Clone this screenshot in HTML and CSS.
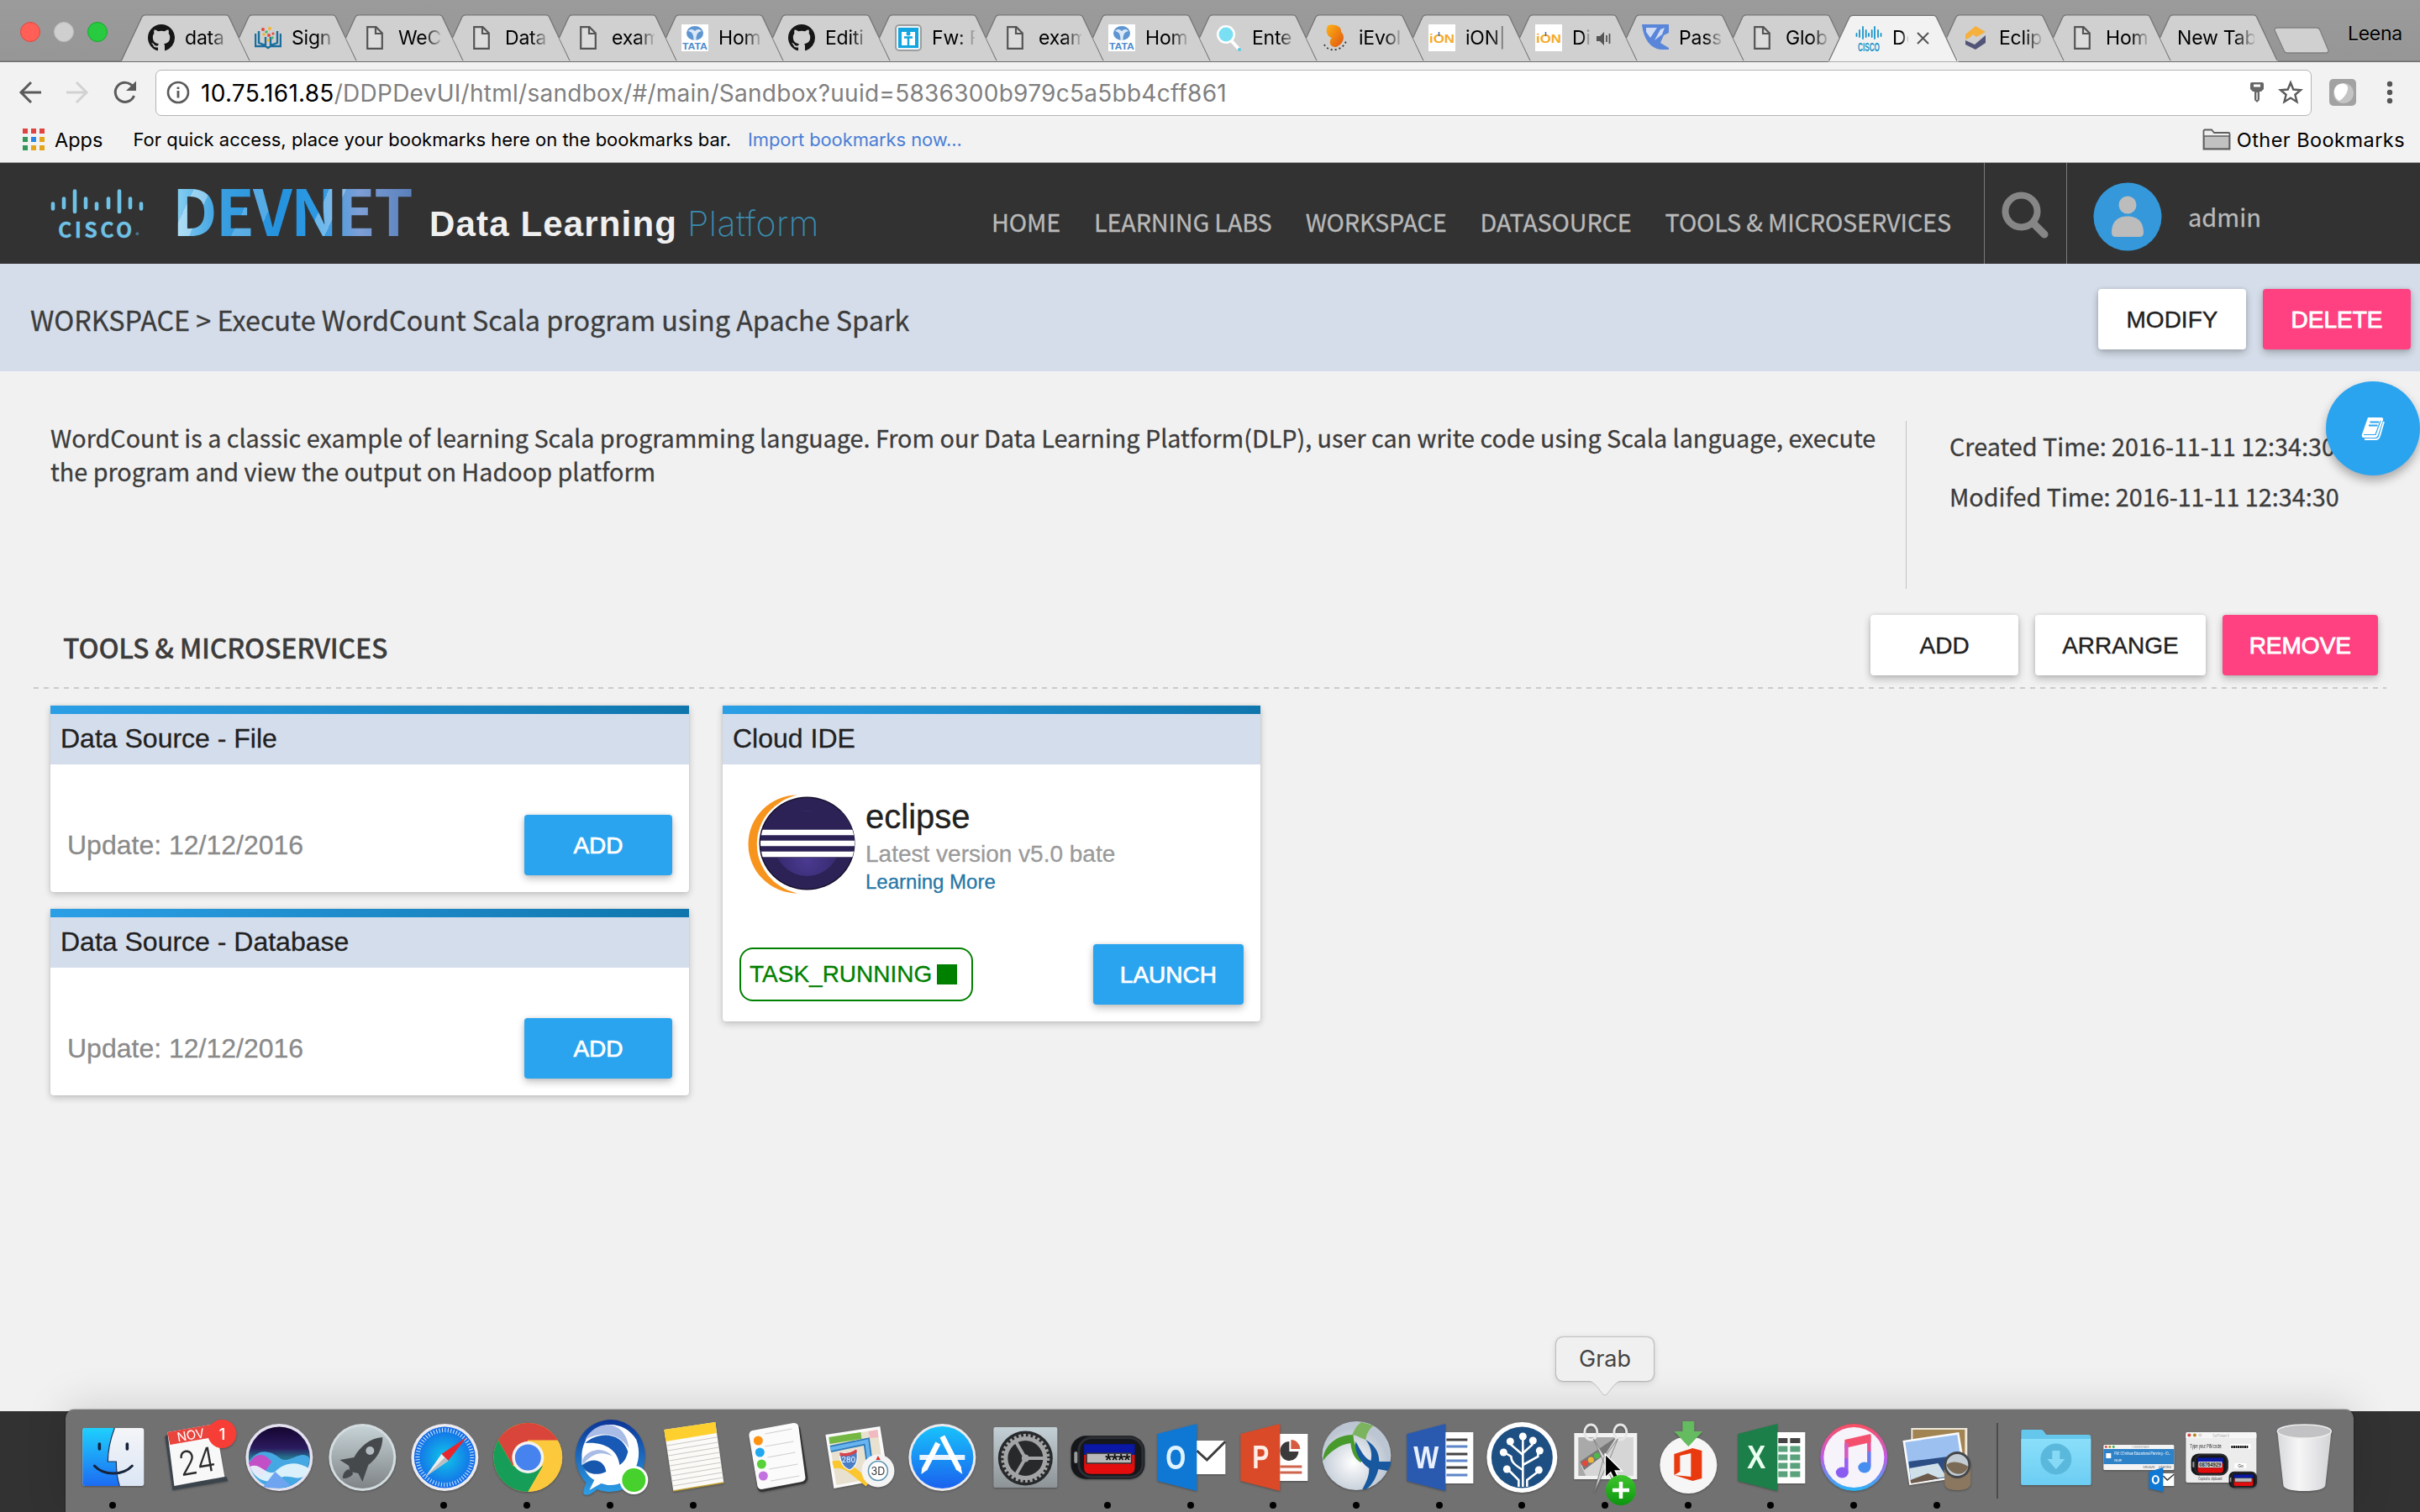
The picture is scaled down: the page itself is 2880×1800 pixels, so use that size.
FILE: index.html
```html
<!DOCTYPE html>
<html lang="en">
<head>
<meta charset="utf-8">
<title>DevNet Data Learning Platform</title>
<link rel="stylesheet" href="styles.css">
</head>
<body>
<svg class="defs" width="0" height="0" aria-hidden="true">
  <defs>
    <linearGradient id="gFinder" x1="0" y1="0" x2="0" y2="1"><stop offset="0" stop-color="#1fd0fd"/><stop offset="1" stop-color="#1c6cf2"/></linearGradient>
    <linearGradient id="gFace" x1="0" y1="0" x2="0" y2="1"><stop offset="0" stop-color="#f4f5f8"/><stop offset="1" stop-color="#dbe6f5"/></linearGradient>
    <linearGradient id="gSiri" x1="0" y1="0" x2="0" y2="1"><stop offset="0" stop-color="#14052f"/><stop offset=".35" stop-color="#2b1a5e"/><stop offset=".5" stop-color="#24708c"/><stop offset="1" stop-color="#3a7be0"/></linearGradient>
    <linearGradient id="gRocket" x1="0" y1="0" x2="0" y2="1"><stop offset="0" stop-color="#c6d2d6"/><stop offset="1" stop-color="#7f8486"/></linearGradient>
    <linearGradient id="gBlue" x1="0" y1="0" x2="0" y2="1"><stop offset="0" stop-color="#18c2fb"/><stop offset="1" stop-color="#1a62ee"/></linearGradient>
    <radialGradient id="gSafari"><stop offset="0" stop-color="#10c8e8"/><stop offset="1" stop-color="#1468e8"/></radialGradient>
    <linearGradient id="gPrefs" x1="0" y1="0" x2="0" y2="1"><stop offset="0" stop-color="#c3d0d6"/><stop offset="1" stop-color="#8d9396"/></linearGradient>
    <linearGradient id="gTunes" x1="0" y1="0" x2="0" y2="1"><stop offset="0" stop-color="#fb4f5e"/><stop offset=".5" stop-color="#c05be8"/><stop offset="1" stop-color="#27b4f6"/></linearGradient>
    <linearGradient id="gJabber" x1="0" y1="0" x2="0" y2="1"><stop offset="0" stop-color="#0b3597"/><stop offset="1" stop-color="#2d9fe6"/></linearGradient>
    <linearGradient id="gFolder" x1="0" y1="0" x2="0" y2="1"><stop offset="0" stop-color="#8adffa"/><stop offset="1" stop-color="#6ccdf3"/></linearGradient>
    <linearGradient id="gTrash" x1="0" y1="0" x2="1" y2="0"><stop offset="0" stop-color="#d8d9db"/><stop offset=".4" stop-color="#f6f6f7"/><stop offset="1" stop-color="#d3d4d6"/></linearGradient>
    <linearGradient id="gPlus" x1="0" y1="0" x2="0" y2="1"><stop offset="0" stop-color="#3fc62d"/><stop offset="1" stop-color="#0c9410"/></linearGradient>
    <radialGradient id="gSphere" cx=".45" cy=".6"><stop offset="0" stop-color="#fff"/><stop offset="1" stop-color="#bcc6d2"/></radialGradient>
    <linearGradient id="gFlame" x1="0" y1="0" x2="1" y2="1"><stop offset="0" stop-color="#fdb316"/><stop offset="1" stop-color="#e0530d"/></linearGradient>
    <radialGradient id="gMoon" cx=".5" cy=".75"><stop offset="0" stop-color="#4b3a92"/><stop offset="1" stop-color="#35296c"/></radialGradient>

    <symbol id="tab" viewBox="0 0 155 56"><path d="M0.5 56L25 3Q26.500 .8 29 .8H125Q127.500 .8 128.500 3L154 56Z" fill="#d0d0d0"/><path d="M0.5 55L25 3Q26.500 .8 29 .8H125Q127.500 .8 128.500 3L153 55" fill="none" stroke="#747474" stroke-width="1.300"/></symbol>
    <symbol id="tab-tucked" viewBox="0 0 155 56"><path d="M13.500 28L25 3Q26.500 .8 29 .8H125Q127.500 .8 128.500 3L154 56H27Z" fill="#d0d0d0"/><path d="M13.500 28L25 3Q26.500 .8 29 .8H125Q127.500 .8 128.500 3L153 55" fill="none" stroke="#747474" stroke-width="1.300"/></symbol>
    <symbol id="tab-active" viewBox="0 0 155 56"><path d="M-1 56L25 3Q26.500 .8 29 .8H125Q127.500 .8 128.500 3L155 56Z" fill="#f2f2f2"/><path d="M0.500 55L25 3Q26.500 .8 29 .8H125Q127.500 .8 128.500 3L153 55" fill="none" stroke="#747474" stroke-width="1.300"/></symbol>

    <symbol id="github" viewBox="0 0 16 16"><path fill="#161616" d="M8 0C3.58 0 0 3.58 0 8c0 3.54 2.29 6.53 5.47 7.59.4.07.55-.17.55-.38 0-.19-.01-.82-.01-1.49-2.01.37-2.53-.49-2.69-.94-.09-.23-.48-.94-.82-1.13-.28-.15-.68-.52-.01-.53.63-.01 1.08.58 1.23.82.72 1.21 1.87.87 2.33.66.07-.52.28-.87.51-1.07-1.78-.2-3.64-.89-3.64-3.95 0-.87.31-1.59.82-2.15-.08-.2-.36-1.02.08-2.12 0 0 .67-.21 2.2.82.64-.18 1.32-.27 2-.27s1.36.09 2 .27c1.53-1.04 2.2-.82 2.2-.82.44 1.1.16 1.92.08 2.12.51.56.82 1.27.82 2.15 0 3.07-1.87 3.75-3.65 3.95.29.25.54.73.54 1.48 0 1.07-.01 1.93-.01 2.2 0 .21.15.46.55.38A8.01 8.01 0 0016 8c0-4.42-3.58-8-8-8z"/></symbol>
    <symbol id="page" viewBox="0 0 32 32"><path d="M7.200 3.200H17.500L24.800 10.500V28.800H7.200Z" fill="#dcdcdc" stroke="#555" stroke-width="2.200"/><path d="M17 3.500V11H24.500" fill="none" stroke="#555" stroke-width="2.200"/></symbol>
    <symbol id="books" viewBox="0 0 32 32"><path d="M1 11V26H13L16 28L19 26H31V11M5 8V22L13 25V15M27 8V22L19 25V15" fill="none" stroke="#1a6e9e" stroke-width="2.400"/><g fill="#e8453c"><circle cx="10" cy="6" r="2"/><circle cx="17" cy="13" r="2"/><circle cx="22" cy="11" r="1.600"/></g><g fill="#f2b52c"><circle cx="18" cy="5" r="2"/><circle cx="11" cy="12" r="1.800"/><circle cx="16" cy="19" r="1.800"/></g><g fill="#4db56a"><circle cx="14" cy="9" r="1.700"/><circle cx="21" cy="16" r="1.700"/></g></symbol>
    <symbol id="tata" viewBox="0 0 32 32"><rect width="32" height="32" fill="#fff"/><ellipse cx="16" cy="10.500" rx="10" ry="8.500" fill="#5f96d2"/><path d="M14.500 19C14.500 12 13 9 8 8C11 5 14 6 16 8C18 6 21 5 24 8C19 9 17.500 12 17.500 19Z" fill="#dbe9f7"/><text x="1" y="30" textLength="30" lengthAdjust="spacingAndGlyphs" class="fav-text" font-size="11" fill="#4d8bcd">TATA</text></symbol>
    <symbol id="person" viewBox="0 0 32 32"><rect x="1" y="1" width="30" height="30" rx="4" fill="#eef5fa" stroke="#9d9d9d" stroke-width="2"/><rect x="4" y="4" width="24" height="24" fill="#12a5df"/><rect x="8" y="9" width="16" height="16" fill="#fff"/><circle cx="16" cy="11" r="2.500" fill="#12a5df"/><path d="M11 15.500H21M16 15V25" stroke="#12a5df" stroke-width="2.400"/></symbol>
    <symbol id="lens" viewBox="0 0 32 32"><path d="M19 19L28 29" stroke="#fff" stroke-width="4"/><circle cx="13" cy="12" r="11" fill="#fff"/><circle cx="13" cy="12" r="8.500" fill="#7bdff3"/><circle cx="29" cy="30" r="2" fill="#57cbe2"/></symbol>
    <symbol id="flame" viewBox="0 0 32 32"><path d="M8 1C18 -1 24 4 23 9C28 13 27 23 17 27C9 27 8 20 12 16C5 14 4 5 8 1Z" fill="url(#gFlame)"/><path d="M3 24C7 33 24 33 29 20" fill="none" stroke="#333" stroke-width="1.800" stroke-dasharray="2 3"/></symbol>
    <symbol id="ion" viewBox="0 0 32 32"><rect width="32" height="32" fill="#fff"/><text x="1" y="22" textLength="30" lengthAdjust="spacingAndGlyphs" class="fav-text" font-size="15" fill="#f5ab27">iON</text><path d="M12.500 9V14" stroke="#3c6cae" stroke-width="1.500"/></symbol>
    <symbol id="pass" viewBox="0 0 32 32"><path d="M0 0H32V10L26 13L22 22L32 28V30H22C10 28 2 18 0 0Z" fill="#5a86da"/><path d="M5 4H18L10 16L5 9ZM22 6L27 4L24 12L15 19Z" fill="#cfdcf4"/></symbol>
    <symbol id="cisco-mark" viewBox="0 0 32 32"><path d="M1.500 11V14M5 7V15M9 3V17M12.700 7V15M16 11V14M19.700 7V15M23 3V17M27 7V15M30.500 11V14" stroke="#1b94c9" stroke-width="1.800" stroke-linecap="round"/><text x="3" y="31.500" textLength="26" lengthAdjust="spacingAndGlyphs" class="fav-text" font-size="15" fill="#1b94c9">CISCO</text></symbol>
    <symbol id="che" viewBox="0 0 32 32"><path d="M4 12L16 2L28 9L17 15L13 12L9 16L4 18Z" fill="#f6b03c"/><path d="M4 19L15 24L28 13V22L16 30L4 24Z" fill="#525577"/></symbol>
    <symbol id="token" viewBox="0 0 90 54"><rect x="0" y="1" width="89" height="52" rx="18" fill="#14161a"/><rect x="8" y="2" width="80" height="50" rx="17" fill="#2c2f35"/><rect x="11" y="5" width="74" height="44" rx="14" fill="#15171b"/><path d="M16 11H77V24H16Z" fill="#0a18a5"/><path d="M16 24H77V40Q77 47 69 47H24Q16 47 16 40Z" fill="#e30d0d"/><rect x="19" y="22" width="54" height="12" fill="#b9b9b9" stroke="#333" stroke-width="1.500"/><rect x="4" y="20" width="4" height="14" rx="2" fill="#9a9a9a"/></symbol>
  </defs>
</svg>

<header class="browser">
  <div class="tabstrip">
    <div class="lights"><i class="light red"></i><i class="light grey"></i><i class="light green"></i></div>
    <div class="tabs">
      <div class="tab"><svg class="tab-shape"><use href="#tab"/></svg><svg class="fav"><use href="#github"/></svg><span class="tab-label">data</span></div>
      <div class="tab"><svg class="tab-shape"><use href="#tab-tucked"/></svg><svg class="fav"><use href="#books"/></svg><span class="tab-label">Sign</span></div>
      <div class="tab"><svg class="tab-shape"><use href="#tab-tucked"/></svg><svg class="fav"><use href="#page"/></svg><span class="tab-label">WeC</span></div>
      <div class="tab"><svg class="tab-shape"><use href="#tab-tucked"/></svg><svg class="fav"><use href="#page"/></svg><span class="tab-label">Data</span></div>
      <div class="tab"><svg class="tab-shape"><use href="#tab-tucked"/></svg><svg class="fav"><use href="#page"/></svg><span class="tab-label">exam</span></div>
      <div class="tab"><svg class="tab-shape"><use href="#tab-tucked"/></svg><svg class="fav"><use href="#tata"/></svg><span class="tab-label">Hom</span></div>
      <div class="tab"><svg class="tab-shape"><use href="#tab-tucked"/></svg><svg class="fav"><use href="#github"/></svg><span class="tab-label">Editi</span></div>
      <div class="tab"><svg class="tab-shape"><use href="#tab-tucked"/></svg><svg class="fav"><use href="#person"/></svg><span class="tab-label">Fw: F</span></div>
      <div class="tab"><svg class="tab-shape"><use href="#tab-tucked"/></svg><svg class="fav"><use href="#page"/></svg><span class="tab-label">exam</span></div>
      <div class="tab"><svg class="tab-shape"><use href="#tab-tucked"/></svg><svg class="fav"><use href="#tata"/></svg><span class="tab-label">Hom</span></div>
      <div class="tab"><svg class="tab-shape"><use href="#tab-tucked"/></svg><svg class="fav"><use href="#lens"/></svg><span class="tab-label">Ente</span></div>
      <div class="tab"><svg class="tab-shape"><use href="#tab-tucked"/></svg><svg class="fav"><use href="#flame"/></svg><span class="tab-label">iEvol</span></div>
      <div class="tab"><svg class="tab-shape"><use href="#tab-tucked"/></svg><svg class="fav"><use href="#ion"/></svg><span class="tab-label">iON|</span></div>
      <div class="tab"><svg class="tab-shape"><use href="#tab-tucked"/></svg><svg class="fav"><use href="#ion"/></svg><span class="tab-label short">Di</span><svg class="tab-tool" viewBox="0 0 20 20"><path d="M1 7H5L10 2V18L5 13H1Z" fill="#555"/><path d="M13 6V14M16.500 4V16" stroke="#555" stroke-width="1.800"/></svg></div>
      <div class="tab"><svg class="tab-shape"><use href="#tab-tucked"/></svg><svg class="fav"><use href="#pass"/></svg><span class="tab-label">Pass</span></div>
      <div class="tab"><svg class="tab-shape"><use href="#tab-tucked"/></svg><svg class="fav"><use href="#page"/></svg><span class="tab-label">Glob</span></div>
      <div class="tab active"><svg class="tab-shape"><use href="#tab-active"/></svg><svg class="fav"><use href="#cisco-mark"/></svg><span class="tab-label tiny">De</span><svg class="tab-tool" viewBox="0 0 20 20"><path d="M4 3L17 16M17 3L4 16" stroke="#555" stroke-width="2"/></svg></div>
      <div class="tab"><svg class="tab-shape"><use href="#tab-tucked"/></svg><svg class="fav"><use href="#che"/></svg><span class="tab-label">Eclip</span></div>
      <div class="tab"><svg class="tab-shape"><use href="#tab-tucked"/></svg><svg class="fav"><use href="#page"/></svg><span class="tab-label">Hom</span></div>
      <div class="tab"><svg class="tab-shape"><use href="#tab-tucked"/></svg><span class="tab-label wide">New Tab</span></div>
    </div>
    <svg class="new-tab" viewBox="0 0 66 32"><path d="M4 1H51Q54 1 55 4L65 28Q65 31 62 31H16Q13 31 12 28L1 4Q1 1 4 1Z" fill="#d0d0d0" stroke="#808080" stroke-width="1.300"/></svg>
    <span class="profile">Leena</span>
  </div>
  <div class="toolbar">
    <svg class="nav-icons" viewBox="0 0 146 30"><path d="M27 15H3M15 3L3 15L15 27" fill="none" stroke="#5a5a5a" stroke-width="3"/><path d="M57 15H81M69 3L81 15L69 27" fill="none" stroke="#d2d2d2" stroke-width="3"/><path d="M136 8A11.500 11.500 0 1 0 137.500 19" fill="none" stroke="#5a5a5a" stroke-width="3"/><path d="M140 1.500V13H128Z" fill="#5a5a5a"/></svg>
    <div class="omnibox">
      <svg class="info" viewBox="0 0 28 28"><circle cx="14" cy="14" r="12" fill="none" stroke="#5a5a5a" stroke-width="2.600"/><path d="M14 12V20.500M14 7.500V10" stroke="#5a5a5a" stroke-width="2.800"/></svg>
      <span class="url"><b>10.75.161.85</b>/DDPDevUI/html/sandbox/#/main/Sandbox?uuid=5836300b979c5a5bb4cff861</span>
      <svg class="key" viewBox="0 0 18 26"><path d="M3 1H15Q17 1 17 3V9L14 12H4L1 9V3Q1 1 3 1Z" fill="#666"/><rect x="5" y="3.500" width="8" height="3" fill="#fff"/><path d="M6 11H12V22L9 25L6 22Z" fill="#666"/><path d="M9 13V22" stroke="#fff" stroke-width="1.300"/></svg>
      <svg class="star" viewBox="0 0 30 30"><path d="M15 3.500L18.300 11.500L27 12.200L20.400 17.800L22.500 26.200L15 21.600L7.500 26.200L9.600 17.800L3 12.200L11.700 11.500Z" fill="none" stroke="#5a5a5a" stroke-width="2.400"/></svg>
    </div>
    <svg class="ext" viewBox="0 0 32 32"><rect width="32" height="32" rx="5" fill="#a2a2a2"/><circle cx="17" cy="17" r="12" fill="#c4c4c4"/><path d="M6 14C7 4 21 3 22 10C23 16 16 24 12 26C8 24 6 20 6 14Z" fill="#fff"/></svg>
    <svg class="dots" viewBox="0 0 8 28"><circle cx="4" cy="4" r="3.200" fill="#555"/><circle cx="4" cy="14" r="3.200" fill="#555"/><circle cx="4" cy="24" r="3.200" fill="#555"/></svg>
  </div>
  <div class="bookmarks">
    <svg class="apps" viewBox="0 0 26 26"><path d="M0 0h6v6h-6zM10 0h6v6h-6zM20 0h6v6h-6z" fill="#e04340"/><path d="M0 10h6v6h-6zM0 20h6v6h-6z" fill="#33985a"/><path d="M10 10h6v6h-6z" fill="#2a87e8"/><path d="M20 10h6v6h-6zM10 20h6v6h-6zM20 20h6v6h-6z" fill="#e5a51b"/></svg>
    <span class="bm-apps">Apps</span>
    <span class="bm-hint">For quick access, place your bookmarks here on the bookmarks bar.</span>
    <span class="bm-import">Import bookmarks now...</span>
    <svg class="folder" viewBox="0 0 34 26"><path d="M1.500 24.500V3Q1.500 1.500 3 1.500H11L14 5H31Q32.500 5 32.500 6.500V24.500Z" fill="#eee" stroke="#5f5f5f" stroke-width="1.800"/><path d="M2 9H32V24H2Z" fill="#c1c1c1" stroke="#5f5f5f" stroke-width="1.400"/></svg>
    <span class="bm-other">Other Bookmarks</span>
  </div>
</header>

<main class="site">
  <nav class="topbar">
    <div class="cisco">
      <svg class="cisco-bars" viewBox="0 0 112 30"><path d="M3 17.500V23.500M16 11.500V22M29 2.500V27M42 11.500V22M55 17.500V23.500M69 11.500V22M82 2.500V27M95 11.500V22M108 17.500V23.500" stroke="#6fc1e5" stroke-width="4.600" stroke-linecap="round"/></svg>
      <div class="cisco-word">CISCO<small>.</small></div>
    </div>
    <div class="devnet"><span>DEVNET</span></div>
    <div class="product"><b>Data Learning</b><span>Platform</span></div>
    <div class="menu"><a>HOME</a><a>LEARNING LABS</a><a>WORKSPACE</a><a>DATASOURCE</a><a>TOOLS &amp; MICROSERVICES</a></div>
    <div class="search"><svg viewBox="0 0 56 56"><circle cx="23.500" cy="23.500" r="19" fill="none" stroke="#868686" stroke-width="8"/><path d="M38 38L51 51" stroke="#868686" stroke-width="9" stroke-linecap="round"/></svg></div>
    <svg class="avatar" viewBox="0 0 82 82"><circle cx="41" cy="41" r="40.500" fill="#3498db"/><ellipse cx="41" cy="27" rx="10.500" ry="10.500" fill="#bcbcbc"/><path d="M22 60C22 46 30 40.500 41 40.500S60 46 60 60Q60 65 55 65H27Q22 65 22 60Z" fill="#bcbcbc"/></svg>
    <span class="user">admin</span>
  </nav>
  <section class="crumbs">
    <h1>WORKSPACE &gt; Execute WordCount Scala program using Apache Spark</h1>
    <button class="btn">MODIFY</button>
    <button class="btn pink">DELETE</button>
  </section>
  <section class="summary">
    <p>WordCount is a classic example of learning Scala programming language. From our Data Learning Platform(DLP), user can write code using Scala language, execute<br>the program and view the output on Hadoop platform</p>
    <div class="times"><div>Created Time: 2016-11-11 12:34:30</div><div>Modifed Time: 2016-11-11 12:34:30</div></div>
    <div class="fab"><svg viewBox="0 0 30 28"><path d="M9 1H25Q28 1 27 4L21 22Q20 25 17 25H4Q1 25 2 21Z" fill="#fff"/><path d="M11.500 6.500H22M10 10.500H20.500" stroke="#2ba4f0" stroke-width="1.800"/><path d="M4 21.500H18L24 5" fill="none" stroke="#2ba4f0" stroke-width="1.200"/><path d="M28 6L23 23Q22 27 18 27H5" fill="none" stroke="#fff" stroke-width="1.800"/></svg></div>
  </section>
  <section class="tools-head">
    <h2>TOOLS &amp; MICROSERVICES</h2>
    <button class="btn">ADD</button>
    <button class="btn">ARRANGE</button>
    <button class="btn pink">REMOVE</button>
  </section>
  <section class="board">
    <div class="column">
      <article class="card"><h3>Data Source - File</h3><div class="card-row"><span class="muted">Update: 12/12/2016</span><button class="btn blue">ADD</button></div></article>
      <article class="card"><h3>Data Source - Database</h3><div class="card-row"><span class="muted">Update: 12/12/2016</span><button class="btn blue">ADD</button></div></article>
    </div>
    <article class="card ide">
      <h3>Cloud IDE</h3>
      <div class="app">
        <svg class="eclipse" viewBox="0 0 130 118"><defs><clipPath id="moon"><ellipse cx="72" cy="58" rx="56" ry="54"/></clipPath></defs><path d="M60 .5A58.500 58.500 0 1 0 60 117.500A62 60 0 0 1 60 .5Z" fill="#f7941e"/><ellipse cx="72" cy="58" rx="59.500" ry="57.500" fill="#fff"/><ellipse cx="71.500" cy="58" rx="57" ry="55.500" fill="#17102c"/><ellipse cx="71.500" cy="58" rx="55.500" ry="54" fill="#2c2255"/><circle cx="71.500" cy="58" r="39" fill="url(#gMoon)"/><g clip-path="url(#moon)"><path d="M10 20H130V75H10Z" fill="#2c2255"/><path d="M15 45H128M15 58H128M15 71H128" stroke="#fff" stroke-width="6.500"/></g></svg>
        <div class="app-text"><strong>eclipse</strong><em>Latest version v5.0 bate</em><a>Learning More</a></div>
      </div>
      <div class="run"><div class="status"><span>TASK_RUNNING</span><i></i></div><button class="btn blue">LAUNCH</button></div>
    </article>
  </section>
</main>

<footer class="dock">
  <div class="app-icon running"><svg viewBox="0 0 98 122"><rect x="13" y="22" width="73" height="69" rx="3" fill="url(#gFace)"/><path d="M16 22H51C45 38 43 50 43 62H53C53 72 54 82 57 91H16Q13 91 13 88V25Q13 22 16 22Z" fill="url(#gFinder)"/><path d="M33 41V47M66 41V47" stroke="#16233a" stroke-width="3.600" stroke-linecap="round"/><path d="M27 67C38 79 61 79 72 67" fill="none" stroke="#16233a" stroke-width="3" stroke-linecap="round"/><path d="M51 22C45 38 43 50 43 62H53C53 72 54 82 57 91" fill="none" stroke="#1b3358" stroke-width="1.200"/></svg></div>
  <div class="app-icon"><svg viewBox="0 0 98 122"><path d="M13 32L16 30L26 90L86 80L88 85L22 96Z" fill="#3b444c"/><path d="M16 27L73 17L84 80L24 91Z" fill="#f8f8f8"/><path d="M16 27L73 17L76 32L19 42Z" fill="#e9453d"/><g transform="rotate(-10 50 50)" class="cal"><text x="47" y="35" text-anchor="middle" font-size="15" fill="#fff">NOV</text><text x="49" y="76" text-anchor="middle" font-size="40" font-weight="300" textLength="44" lengthAdjust="spacingAndGlyphs" fill="#2b2b2b">24</text></g><circle cx="81" cy="29" r="17" fill="#f73e36"/><text x="81" y="36" text-anchor="middle" font-size="19" class="cal badge" fill="#fff">1</text></svg></div>
  <div class="app-icon"><svg viewBox="-1 0 98 122"><circle cx="49" cy="57" r="40" fill="#e4e2ef"/><circle cx="49" cy="57" r="36.500" fill="url(#gSiri)"/><path d="M13 62C25 44 40 50 50 58S76 46 85 58C84 78 68 93.500 49 93.500S16 82 13 62Z" fill="#46a8e2"/><path d="M13 64C20 52 30 50 40 62L28 80C18 76 14 70 13 64Z" fill="#d83fc0" opacity=".85"/><path d="M14 68C26 62 34 80 44 74C54 64 68 60 84.500 70C76 92 62 74 49 82S20 84 14 68Z" fill="#eaf8ff" opacity=".9"/><path d="M30 92L44 74L62 90Q46 96 30 92Z" fill="#6ea4f0"/></svg></div>
  <div class="app-icon"><svg viewBox="-1 0 98 122"><circle cx="49" cy="57" r="40" fill="#d3dcdf"/><circle cx="49" cy="57" r="37" fill="url(#gRocket)"/><path d="M73 33C58 34 46 44 39 57L22 60L33 67L34 74L44 76L49 86L56 66C67 58 73 46 73 33ZM32 71C26 74 25 80 26 82C31 82 36 80 38 76Z" fill="#45494c"/><circle cx="58" cy="49" r="5" fill="#b3bcc0"/></svg></div>
  <div class="app-icon running"><svg viewBox="-1 0 98 122"><circle cx="49" cy="57" r="40" fill="#ececf0"/><circle cx="49" cy="57" r="36.500" fill="url(#gSafari)"/><circle cx="49" cy="57" r="32.500" fill="none" stroke="#d4ecfa" stroke-width="5" stroke-dasharray="1 2.400"/><path d="M75 33L45 53L53 61Z" fill="#e8262d"/><path d="M26 80L45 53L53 61Z" fill="#eee"/><path d="M26 80L53 61L49 57Z" fill="#b9bdc2"/></svg></div>
  <div class="app-icon running"><svg viewBox="-1 0 98 122"><circle cx="49" cy="57" r="41" fill="#fcc93c"/><path d="M13.500 36.500A41 41 0 0 1 84.500 36.500H49L31 67Z" fill="#d9453a"/><path d="M13.500 36.500A41 41 0 0 0 49 98L67 67L49 75L31 67Z" fill="#169e58"/><path d="M49 98A41 41 0 0 0 84.500 37H49L67 67Z" fill="#fcc93c"/><circle cx="49" cy="57" r="19" fill="#f4f2ee"/><circle cx="49" cy="57" r="15.500" fill="#4683ef"/></svg></div>
  <div class="app-icon running"><svg viewBox="0 0 98 122"><path d="M49 12A41.500 43 0 0 1 49 98C42 98 36 96 33 95C28 100 22 103 18 101C15 99 19 91 20 87C-4 62 8 14 49 12Z" fill="url(#gJabber)"/><path d="M20 36C32 12 66 12 80 36C90 64 72 92 46 90L38 88L24 96L30 84C16 76 10 54 20 36Z" fill="#fff"/><path d="M19 36C32 10 68 12 71 46C58 26 36 26 19 36Z" fill="#a9bce6"/><path d="M19 40C34 26 62 26 70 50C68 58 66 62 60 66C58 48 42 38 19 40Z" fill="#1759b4"/><path d="M15 62A21 18 0 0 1 57 62C56 72 50 74 50 74C52 60 40 50 15 66Z" fill="#fff"/><path d="M16 60A20 17 0 0 1 52 56C36 48 26 54 16 66Z" fill="#a9bce6"/><path d="M16 66C28 56 42 60 44 74C32 80 18 76 16 66Z" fill="#1757ae"/><circle cx="77" cy="84" r="17" fill="#fff"/><circle cx="77" cy="84" r="14" fill="#46d12c"/></svg></div>
  <div class="app-icon running"><svg viewBox="0 0 98 122"><path d="M14 24L75 15L85 87L25 97Z" fill="#fbfaf6"/><path d="M14 24L75 15L76.500 28L16 38Z" fill="#fdd02f"/><path d="M17 43L77 33M18 49L78 39M19 55L79 45M20 61L80 51M21 67L81 57M21 73L82 63M22 79L82 69M23 85L83 75M24 91L84 81" stroke="#c9c9c9" stroke-width="1.200"/><path d="M25 97L85 87" stroke="#bb9b2d" stroke-width="1.500"/></svg></div>
  <div class="app-icon"><svg viewBox="0 0 98 122"><path d="M22 28L72 19Q77 18 78 23L87 81Q87 86 83 88L33 98Q28 98 27 93L18 33Q18 29 22 28Z" fill="#333"/><path d="M21 25L70 16Q75 16 76 20L84 80Q85 84 80 86L32 95Q28 95 27 91L17 31Q17 26 21 25Z" fill="#fbfbfb"/><path d="M36 29L68 23M36 44L70 38M39 57L72 51M41 71L75 65M43 85L77 79" stroke="#cfcfcf" stroke-width="1.200"/><circle cx="28" cy="37" r="5.500" fill="#ff9210"/><circle cx="30" cy="51" r="5.500" fill="#20a9f1"/><circle cx="32" cy="65" r="5.500" fill="#58d13a"/><circle cx="34" cy="79" r="5.500" fill="#c273e0"/></svg></div>
  <div class="app-icon"><svg viewBox="0 0 98 122"><path d="M9 30L74 20L84 82L19 94Z" fill="#fafafa"/><path d="M13 33L71 24L79 80L22 90Z" fill="#e8e1cf"/><path d="M13 33L51 27L52 35L14 41Z" fill="#74b843"/><path d="M60 26L71 24L72 33L62 34Z" fill="#f2b9c0"/><path d="M15 47L58 38L62 68" fill="none" stroke="#2e79b9" stroke-width="8"/><path d="M15 47L58 38L62 68" fill="none" stroke="#67b4ee" stroke-width="4.500"/><path d="M18 66C34 62 44 76 60 88" fill="none" stroke="#fcc62f" stroke-width="9"/><path d="M26 51Q36 54 46 47Q50 66 38 72Q26 68 26 51Z" fill="#4a7fc8" stroke="#fff" stroke-width="1.200"/><path d="M26 51Q36 54 46 47L46.500 51Q37 57 26 55Z" fill="#d6434a"/><text x="36.500" y="63" text-anchor="middle" font-size="9" class="cal" fill="#fff">280</text><circle cx="71.600" cy="73" r="19.500" fill="#f4f4f4"/><circle cx="71.600" cy="73" r="11.500" fill="#fff" stroke="#5b93b0" stroke-width="1.500"/><text x="71.600" y="78" text-anchor="middle" font-size="12.500" class="cal" fill="#333">3D</text><path d="M71.600 55L74.500 60H69Z" fill="#d9342b"/></svg></div>
  <div class="app-icon"><svg viewBox="0 0 98 122"><circle cx="49" cy="57" r="40" fill="#ebebef"/><circle cx="49" cy="57" r="37" fill="url(#gBlue)"/><path d="M22 57H76" stroke="#e8f3fd" stroke-width="6"/><path d="M44 40L28 71M49 32L69 71" stroke="#fff" stroke-width="6.500"/><path d="M25 69L31 72L24 77ZM65 71L71 68L73 77Z" fill="#fff"/></svg></div>
  <div class="app-icon"><svg viewBox="0 0 98 122"><rect x="12" y="21" width="76" height="72" rx="2" fill="url(#gPrefs)"/><circle cx="50" cy="58" r="32.500" fill="#27292b"/><circle cx="50" cy="58" r="23.500" fill="none" stroke="#a2a4a5" stroke-width="5"/><circle cx="50" cy="58" r="27" fill="none" stroke="#a2a4a5" stroke-width="4" stroke-dasharray="3 2.650"/><path d="M50 58H72M50 58L39 39M50 58L39 77" stroke="#a2a4a5" stroke-width="4"/><circle cx="50" cy="58" r="4.500" fill="#a2a4a5"/></svg></div>
  <div class="app-icon running"><svg viewBox="0 0 98 122"><use href="#token" x="5" y="30" width="89" height="54"/><text x="46" y="67" font-size="20" textLength="30" class="fav-text" fill="#111">****</text></svg></div>
  <div class="app-icon running"><svg viewBox="0 0 98 122"><rect x="50" y="37" width="40" height="40" fill="#fff"/><path d="M56 49L68 60L90 38" fill="none" stroke="#3d3d3d" stroke-width="3"/><path d="M9 29L56 17V97L9 85Z" fill="#0f78d4"/><text x="19" y="71" font-size="40" textLength="24" lengthAdjust="spacingAndGlyphs" class="fav-text" fill="#dff2ff">O</text></svg></div>
  <div class="app-icon running"><svg viewBox="0 0 98 122"><rect x="50" y="29" width="40" height="56" fill="#fff"/><path d="M68 38A11 11.500 0 1 0 79 50H68Z" fill="#3a3a3a"/><path d="M70 36A11 11.500 0 0 1 81 47H70Z" fill="#d55b41"/><path d="M57 68H83M57 75H83" stroke="#d0654d" stroke-width="3"/><path d="M10 29L57 17V97L10 85Z" fill="#da4a28"/><text x="24" y="70" font-size="38" textLength="20" lengthAdjust="spacingAndGlyphs" class="fav-text" fill="#ffece6">P</text></svg></div>
  <div class="app-icon running"><svg viewBox="0 0 98 122"><circle cx="49" cy="55" r="41" fill="url(#gSphere)"/><path d="M9 61C10 42 26 30 45 30C46 40 48 48 58 58L54 63C46 58 43 50 42 40C28 42 18 50 9 61Z" fill="#499a2d"/><path d="M55 15L69 19C62 26 61 30 60 36C54 34 48 30 44 30C47 23 50 18 55 15Z" fill="#7cb35e"/><path d="M60 36C70 42 76 50 76 62H90C90 66 88 70 86 73L75 71C73 80 68 90 60 95L56 95C62 84 64 78 64 70C52 62 46 48 48 38C54 48 58 58 66 61C68 52 66 44 60 36Z" fill="#17589f"/></svg></div>
  <div class="app-icon running"><svg viewBox="0 0 98 122"><rect x="50" y="27" width="39" height="61" fill="#fff"/><path d="M57 36H82M57 53H82M57 69H82" stroke="#444" stroke-width="3"/><path d="M57 44H82M57 61H82M57 78H82" stroke="#5f86c8" stroke-width="3"/><path d="M10 29L56 17V97L10 85Z" fill="#2a5aaf"/><text x="18" y="70" font-size="36" textLength="30" lengthAdjust="spacingAndGlyphs" class="fav-text" fill="#e9f0ff">W</text></svg></div>
  <div class="app-icon running"><svg viewBox="0 0 98 122"><circle cx="49" cy="57" r="42" fill="#fff"/><circle cx="49" cy="57" r="36.500" fill="#1d4f82"/><g fill="none" stroke="#fff" stroke-width="2.600"><path d="M50 92V36M50 72C40 66 36 62 36 56L28 51M50 54L36 42V38M50 66L68 56V50M50 52L61 42V38M45 92V84L33 72M55 92V84L68 74"/></g><g fill="#fff"><circle cx="50" cy="32" r="4.500"/><circle cx="35" cy="38" r="4.500"/><circle cx="62" cy="37" r="4.500"/><circle cx="27" cy="51" r="4.500"/><circle cx="70" cy="49" r="4.500"/><circle cx="31" cy="71" r="4.500"/><circle cx="69" cy="72" r="4.500"/></g></svg></div>
  <div class="app-icon running"><svg viewBox="0 0 98 122"><rect x="12" y="28" width="75" height="55" fill="#f2f2f2"/><rect x="17" y="33" width="65" height="46" fill="#a9a9a9"/><path d="M62 33H82V79H26L20 66Z" fill="#d6d6d6"/><path d="M19 62L62 33L50 52L24 72Z" fill="#777"/><circle cx="25" cy="64" r="3.500" fill="#e2493b"/><circle cx="32" cy="60" r="3.500" fill="#eeb53a"/><circle cx="39" cy="55" r="3.500" fill="#4fb84a"/><ellipse cx="32" cy="27" rx="7.500" ry="9" fill="none" stroke="#e6e6e6" stroke-width="3"/><ellipse cx="67" cy="27" rx="7.500" ry="9" fill="none" stroke="#e6e6e6" stroke-width="3"/><path d="M35 35L52 62L64 98L47 62ZM64 35L47 58L36 98L53 62Z" fill="#d4d4d4" stroke="#777" stroke-width=".8"/><path d="M49 53V81L55.500 75L61 86L66 83L61 73H69Z" fill="#000" stroke="#fff" stroke-width="1.500"/></svg></div>
  <div class="app-icon running"><svg viewBox="0 0 98 122"><circle cx="49" cy="66" r="34" fill="#f6f6f6"/><path d="M42 14H56V26H66L49 44L32 26H42Z" fill="#65bb5f"/><path d="M32 53L54 46L65 49V82L54 85L32 78L52 80V52L39 55V74L32 78Z" fill="#e93a0f"/></svg></div>
  <div class="app-icon running"><svg viewBox="0 0 98 122"><rect x="50" y="27" width="40" height="61" fill="#fff"/><path d="M58 37H69M72 37H84" stroke="#444" stroke-width="6"/><path d="M58 47H69M72 47H84M58 57H69M72 57H84M58 67H69M72 67H84M58 77H69M72 77H84" stroke="#5aa27c" stroke-width="7"/><path d="M10 29L57 17V97L10 85Z" fill="#1c7e48"/><text x="21" y="70" font-size="38" textLength="22" lengthAdjust="spacingAndGlyphs" class="fav-text" fill="#eafff2">X</text></svg></div>
  <div class="app-icon running"><svg viewBox="0 0 98 122"><circle cx="49" cy="57" r="40" fill="url(#gTunes)"/><circle cx="49" cy="57" r="36" fill="#f6f4fa"/><path d="M67 31V50" stroke="#e0559c" stroke-width="4.500"/><path d="M67 50V68" stroke="#6a7cf0" stroke-width="4.500"/><path d="M38 36L69 29V39L38 46Z" fill="#f4506e"/><path d="M40 40V58" stroke="#d45cc0" stroke-width="4.500"/><path d="M40 58V74" stroke="#9a5cf0" stroke-width="4.500"/><ellipse cx="35" cy="75" rx="7.500" ry="6.500" fill="#8a5cf0"/><ellipse cx="61.500" cy="69" rx="7.500" ry="6.500" fill="#478ef0"/></svg></div>
  <div class="app-icon running"><svg viewBox="0 0 98 122"><rect x="18" y="22" width="67" height="50" fill="#efe9dd"/><rect x="20" y="24" width="62" height="46" fill="#a28453"/><path d="M8 37L75 27L84 80L16 90Z" fill="#fafafa"/><path d="M11 39L73 30L80 78L18 87Z" fill="#9cc0f0"/><path d="M15 62L77 54L80 78L18 87Z" fill="#2d4d85"/><path d="M16 70L50 64L60 80L18 87Z" fill="#cfe0ea"/><path d="M17 84L38 76L52 82L18 88Z" fill="#6c5a4c"/><path d="M57 64H89V88Q88 96 73 96T58 88Z" fill="#8b7760"/><circle cx="73" cy="66" r="16" fill="#44474a"/><circle cx="73" cy="66" r="13" fill="#c3ccd3"/><path d="M60 66C66 60 78 62 86 68C82 80 66 80 60 66Z" fill="#7b6a55"/></svg></div>
  <i class="divider"></i>
  <div class="app-icon"><svg viewBox="0 0 98 122"><path d="M8 26Q8 24 10 24H32Q34 24 35 26L38 30H88Q91 30 91 33V88Q91 90 89 90H10Q8 90 8 88Z" fill="#66c7ec"/><path d="M8 35H91V88Q91 90 89 90H10Q8 90 8 88Z" fill="url(#gFolder)"/><circle cx="49.500" cy="59" r="18.500" fill="#5ab8dc"/><path d="M45 49H54V59H60L49.500 71L39 59H45Z" fill="#86daf6"/></svg></div>
  <div class="app-icon"><svg viewBox="0 0 98 122"><rect x="8" y="42" width="84" height="30" rx="1.500" fill="#f4f4f4"/><rect x="8" y="47" width="84" height="18" fill="#2e82c8"/><rect x="11" y="52" width="6" height="6" fill="#fff"/><g class="cal"><circle cx="11" cy="44.500" r="1.400" fill="#e0443e"/><circle cx="15.500" cy="44.500" r="1.400" fill="#b5881c"/><circle cx="20" cy="44.500" r="1.400" fill="#2db34a"/><text x="42" y="46.300" font-size="4" fill="#999">1 Reminder</text><text x="21" y="54" font-size="5" textLength="67" lengthAdjust="spacingAndGlyphs" fill="#fff">FW: COntinue Educational Planning - IO...</text><text x="21" y="62" font-size="4" fill="#fff">Now</text><text x="55" y="70" font-size="4" fill="#555">Snooze</text><text x="74" y="70" font-size="4" fill="#555">Dismiss</text></g><rect x="78" y="76" width="14" height="15" fill="#fff"/><path d="M79 79L84 84L92 77" fill="none" stroke="#333" stroke-width="1.500"/><path d="M62 74L79 69V98L62 94Z" fill="#0f78d4"/><ellipse cx="70" cy="83.500" rx="3.500" ry="4.500" fill="none" stroke="#fff" stroke-width="2.200"/></svg></div>
  <div class="app-icon"><svg viewBox="0 0 98 122"><rect x="7" y="27" width="84" height="60" rx="2" fill="#ececec"/><path d="M9 27H89Q91 27 91 29V34H7V29Q7 27 9 27Z" fill="#f6f6f6"/><g class="cal"><circle cx="11" cy="30.500" r="2" fill="#e0443e"/><circle cx="17.500" cy="30.500" r="2" fill="#b5881c"/><circle cx="24" cy="30.500" r="2" fill="#d4d4d4"/><text x="39" y="33" font-size="5" textLength="20" lengthAdjust="spacingAndGlyphs" fill="#aaa">SofToken II</text><text x="12" y="46" font-size="6" textLength="38" lengthAdjust="spacingAndGlyphs" fill="#222">Type your PIN code:</text><rect x="60" y="41" width="24" height="6" fill="#fff"/><path d="M61 44.500H81" stroke="#111" stroke-width="3" stroke-dasharray="2 .6"/><rect x="65" y="64" width="14" height="6" fill="#fff"/><text x="69" y="69" font-size="5" fill="#333">Go</text><text x="22" y="84" font-size="4.500" textLength="28" lengthAdjust="spacingAndGlyphs" fill="#333">Copied to clipboard</text></g><use href="#token" x="13" y="52" width="45" height="27"/><rect x="22" y="62" width="28" height="7" fill="#d6d6d6"/><text x="23" y="68" font-size="6.500" textLength="26" lengthAdjust="spacingAndGlyphs" class="fav-text" fill="#222">08764929</text><use href="#token" x="58" y="73" width="34" height="21"/></svg></div>
  <div class="app-icon"><svg viewBox="0 0 98 122"><path d="M17 27L24 90Q25 97 49 97T74 90L81 27Z" fill="url(#gTrash)"/><ellipse cx="49" cy="26" rx="32" ry="8" fill="#c2c2c4" stroke="#eee" stroke-width="1.500"/></svg></div>
  <div class="tooltip">Grab<svg viewBox="0 0 36 18"><path d="M0 0H36C28 2 22 17 18 17S8 2 0 0Z" fill="#f0f0f0"/><path d="M0 .5C8 2 14 17 18 17S28 2 36 .5" fill="none" stroke="#bdbdbd" stroke-width="1"/></svg></div>
  <svg class="plus" viewBox="0 0 38 38"><circle cx="19" cy="19" r="18" fill="url(#gPlus)"/><path d="M19 9V29M9 19H29" stroke="#fff" stroke-width="4.500"/></svg>
</footer>
</body>
</html>
```
FILE: styles.css
```css
* { box-sizing: border-box; }
body {
  margin: 0;
  width: 2880px;
  height: 1800px;
  overflow: hidden;
  position: relative;
  display: flex;
  flex-direction: column;
  background: #323232;
  font-family: "Liberation Sans", Arial, sans-serif;
}
svg { display: block; flex: none; }
.defs { position: absolute; }
.fav-text { font-family: "Liberation Sans", Arial, sans-serif; font-weight: 700; }
.cal { font-family: Inter, sans-serif; }
.badge { font-weight: 500; }

/* browser window */
.browser { height: 194px; background: #f2f2f2; border-bottom: 1.500px solid #a6a6a6; font-family: Inter, Roboto, sans-serif; color: #000; }
.tabstrip { height: 74px; display: flex; background: linear-gradient(#9b9b9b, #969696); box-shadow: inset 0 -1.500px 0 #6d6d6d; }
.lights { width: 144px; display: flex; gap: 16px; padding: 26px 0 0 24px; }
.light { width: 24px; height: 24px; border-radius: 50%; }
.red { background: #ff5f57; border: 1px solid #e2473f; }
.grey { background: #cfcfcf; border: 1px solid #bdbdbd; }
.green { background: #28cb40; border: 1px solid #17a82c; }
.tabs { display: flex; height: 74px; padding-top: 17px; width: 2562px; }
.tab { position: relative; flex: 0 0 127px; height: 57px; display: flex; padding: 12px 0 0 32px; }
.tab-shape { position: absolute; left: 0; top: 0; width: 155px; height: 56px; z-index: 0; }
.tab > :not(.tab-shape) { position: relative; z-index: 1; }
.active { z-index: 2; }
.active .tab-shape { height: 57px; }
.fav { width: 32px; height: 32px; }
.tab-label { width: 51px; margin-left: 12px; overflow: hidden; white-space: nowrap; font-size: 23px; letter-spacing: -.2px; line-height: 33px; -webkit-mask-image: linear-gradient(90deg, #000 60%, rgba(0,0,0,.1)); mask-image: linear-gradient(90deg, #000 60%, rgba(0,0,0,.1)); }
.short { width: 21px; }
.tiny { width: 19px; }
.wide { width: 92px; margin-left: 2px; -webkit-mask-image: linear-gradient(90deg, #000 75%, rgba(0,0,0,.1)); mask-image: linear-gradient(90deg, #000 75%, rgba(0,0,0,.1)); }
.tab-tool { width: 20px; height: 20px; margin: 7px 0 0 7px; }
.new-tab { width: 66px; height: 32px; margin-top: 32px; }
.profile { margin: 23px 0 0 22px; font-size: 23px; line-height: 34px; letter-spacing: -.3px; text-shadow: 0 1px 0 #bbb; }
.toolbar { display: flex; align-items: center; height: 72px; padding-left: 22px; }
.nav-icons { width: 146px; height: 30px; }
.omnibox { width: 2566px; height: 55px; margin-left: 17px; border: 1.500px solid #b4b4b4; border-radius: 7px; background: #fff; display: flex; align-items: center; padding: 0 9px 0 12px; }
.info { width: 28px; height: 28px; }
.url { margin-left: 13px; margin-right: auto; padding-top: 1px; color: #808080; font-size: 28px; letter-spacing: .27px; white-space: nowrap; }
.url b { font-weight: 400; color: #000; }
.key { width: 18px; height: 26px; }
.star { width: 30px; height: 30px; margin-left: 16px; }
.ext { width: 32px; height: 32px; margin-left: 21px; }
.dots { width: 8px; height: 28px; margin-left: 36px; }
.bookmarks { display: flex; align-items: center; height: 46px; padding: 0 18px 0 27px; font-size: 23.500px; white-space: nowrap; margin-top: -3px; }
.apps { width: 26px; height: 26px; }
.bm-apps { margin-left: 12px; }
.bm-hint { margin-left: 36px; font-size: 22px; }
.bm-import { margin-left: 20px; font-size: 22px; letter-spacing: -.1px; color: #4a7fd6; }
.folder { width: 34px; height: 26px; margin-left: auto; }
.bm-other { margin-left: 7px; letter-spacing: .45px; }

/* site */
.site { height: 1486px; background: #f1f1f1; color: #3c3c3c; font-family: "Noto Sans CJK SC", "Noto Sans", sans-serif; -webkit-text-stroke: .3px; }
.topbar { height: 120px; background: #323232; display: flex; padding-left: 60px; white-space: nowrap; }
.cisco { width: 145px; padding-top: 31px; }
.cisco-bars { width: 112px; height: 30px; }
.cisco-word { padding-left: 9px; color: #6fc1e5; font-weight: 700; font-size: 25px; line-height: 34px; letter-spacing: 3.300px; display: flex; }
.cisco-word small { font-size: 18px; color: #49778c; }
.devnet { width: 306px; font-weight: 700; font-size: 75px; line-height: 110px; letter-spacing: -1.700px; }
.devnet span { background: linear-gradient(115deg, transparent 0 12%, rgba(255,255,255,.35) 12% 18%, transparent 18% 33%, rgba(255,255,255,.2) 33% 42%, transparent 42% 60%, rgba(255,255,255,.3) 60% 66%, transparent 66%), linear-gradient(90deg, #8ed2f2, #3a9fe0 20%, #2492de 45%, #2e9ae4 62%, #7d9fd6 78%, #5a80ba); -webkit-background-clip: text; background-clip: text; color: transparent; -webkit-text-stroke: 0; }
.product { width: 671px; padding-top: 45px; font: 700 42px/55px "Liberation Sans", Arial, sans-serif; letter-spacing: 1.150px; color: #f0f0f0; display: flex; gap: 12px; -webkit-text-stroke: 0; }
.product span { font: 200 41px/55px Inter, sans-serif; letter-spacing: .5px; color: #3a8cb0; }
.menu { display: flex; gap: 40px; width: 1179px; margin-left: -2px; padding-top: 19px; margin-right: 2px; font-size: 28.800px; letter-spacing: -.16px; line-height: 101px; color: #b9b9b9; }
.search { width: 99px; border: solid #7b7b7b; border-width: 0 1.500px; padding: 34px 0 0 20px; }
.search svg { width: 56px; height: 56px; }
.avatar { width: 82px; height: 82px; margin: 23px 0 0 31px; }
.user { margin-left: 31px; font-size: 29px; line-height: 127px; color: #b9b9b9; }
.crumbs { height: 128px; background: #d4dde9; display: flex; align-items: center; padding: 4px 11px 0 36px; gap: 20px; }
h1, h2, h3, p { margin: 0; font-weight: 400; }
h1 { flex: 1; font-size: 32.350px; line-height: 60px; white-space: nowrap; }
.btn { min-width: 176px; height: 72px; padding: 1px 32px 0; border: 0; border-radius: 4px; background: #fff; color: #212121; font: 400 28px/72px "Liberation Sans", Arial, sans-serif; box-shadow: 0 4px 10px rgba(0,0,0,.24), 0 0 4px rgba(0,0,0,.1); white-space: nowrap; flex: none; -webkit-text-stroke: .4px; }
.btn.pink { background: #ff4081; color: #fff; -webkit-text-stroke: .9px; }
.btn.blue { background: #2ba4f0; color: #fff; -webkit-text-stroke: .7px; }
.summary { position: relative; height: 290px; padding: 59px 0 0 60px; display: flex; font-size: 28.750px; line-height: 40px; white-space: nowrap; }
.summary p { width: 2208px; }
.times { height: 200px; padding-left: 51px; border-left: 1.500px solid #c4c4c4; line-height: 60px; }
.fab { position: absolute; right: 0; top: 12px; width: 112px; height: 112px; border-radius: 50%; background: #2ba4f0; box-shadow: 0 6px 12px rgba(0,0,0,.3); display: flex; align-items: center; justify-content: center; }
.fab svg { width: 30px; height: 28px; }
.tools-head { height: 88px; margin: 0 40px; padding: 0 10px 16px 35px; display: flex; align-items: center; gap: 20px; background: repeating-linear-gradient(90deg, #cbcbcb 0 6px, transparent 6px 12px) 0 100% / 100% 2px no-repeat; }
h2 { flex: 1; font-size: 32.100px; letter-spacing: -.25px; line-height: 60px; font-weight: 500; padding-top: 4px; }
.board { display: flex; gap: 40px; padding: 20px 0 0 60px; align-items: flex-start; font-family: "Liberation Sans", Arial, sans-serif; }
.column { width: 760px; display: grid; gap: 20px; }
.card { border-radius: 0 0 4px 4px; box-shadow: 0 3px 8px rgba(0,0,0,.2), 0 0 3px rgba(0,0,0,.1); padding-top: 10px; background: linear-gradient(90deg, #2b9fe6, #0f76ad) 0 0 / 100% 10px no-repeat #fff; }
.column .card { height: 222px; }
h3 { height: 60px; padding: 0 12px; background: #d4ddec; color: #212121; font-size: 32px; line-height: 58px; white-space: nowrap; }
.card-row { height: 152px; padding: 40px 20px 0; display: flex; justify-content: space-between; align-items: center; }
.muted { font-size: 32px; color: #8a8a8a; }
.ide { width: 640px; height: 376px; }
.app { display: flex; height: 214px; padding: 36px 0 0 29px; }
.eclipse { width: 130px; height: 118px; }
.app-text { margin-left: 11px; padding-top: 1px; display: flex; flex-direction: column; white-space: nowrap; align-items: flex-start; }
.app-text strong { font-weight: 400; font-size: 40px; line-height: 50px; color: #212121; }
.app-text em { font-style: normal; font-size: 28px; line-height: 40px; color: #9a9a9a; }
.app-text a { font-size: 24px; line-height: 26px; color: #2577a6; }
.run { display: flex; justify-content: space-between; align-items: center; height: 72px; padding: 0 20px; }
.status { width: 278px; height: 64px; border: 2px solid #008000; border-radius: 16px; display: flex; align-items: center; gap: 6px; padding-left: 10px; color: #008000; font-size: 28px; }
.status i { width: 24px; height: 24px; background: #008000; }

/* dock */
.dock { position: absolute; left: 78px; top: 1678px; width: 2723px; height: 122px; display: flex; padding-left: 6.700px; background: #717171; border-radius: 10px 10px 0 0; box-shadow: 0 0 2px rgba(0,0,0,.6), 0 -6px 50px rgba(0,0,0,.13); }
.app-icon { width: 98.700px; height: 122px; flex: none; position: relative; }
.app-icon svg { width: 98.700px; height: 122px; filter: drop-shadow(0 1px 1px rgba(0,0,0,.3)); }
.running::after { content: ""; position: absolute; left: 45px; bottom: 4px; width: 8px; height: 8px; border-radius: 50%; background: #000; }
.divider { width: 2px; height: 90px; margin: 16px 19px 0 21px; background: #4b4b4b; flex: none; }
.tooltip { position: absolute; left: 1774px; top: -86px; width: 116px; height: 52px; border-radius: 8px; background: #f0f0f0; box-shadow: 0 0 2px rgba(0,0,0,.6), 0 2px 8px rgba(0,0,0,.15); text-align: center; font: 27px/52px Inter, sans-serif; color: #444; }
.tooltip svg { position: absolute; left: 40px; top: 52px; width: 36px; height: 18px; }
.plus { position: absolute; left: 1832px; top: 77px; width: 38px; height: 38px; }
```
